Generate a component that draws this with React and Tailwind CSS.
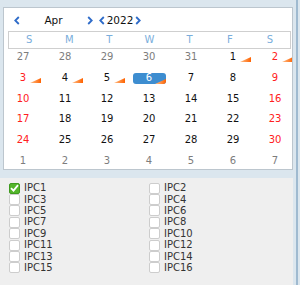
import React from 'react';

const weekdays = ['S', 'M', 'T', 'W', 'T', 'F', 'S'];

// each day: [label, kind, marked]; kind: 'out' | 'in' | 'wkend' | 'sel'
const weeks = [
  [['27', 'out'], ['28', 'out'], ['29', 'out'], ['30', 'out'], ['31', 'out'], ['1', 'in', true], ['2', 'wkend', true]],
  [['3', 'wkend', true], ['4', 'in', true], ['5', 'in', true], ['6', 'sel', true], ['7', 'in'], ['8', 'in'], ['9', 'wkend']],
  [['10', 'wkend'], ['11', 'in'], ['12', 'in'], ['13', 'in'], ['14', 'in'], ['15', 'in'], ['16', 'wkend']],
  [['17', 'wkend'], ['18', 'in'], ['19', 'in'], ['20', 'in'], ['21', 'in'], ['22', 'in'], ['23', 'wkend']],
  [['24', 'wkend'], ['25', 'in'], ['26', 'in'], ['27', 'in'], ['28', 'in'], ['29', 'in'], ['30', 'wkend']],
  [['1', 'out'], ['2', 'out'], ['3', 'out'], ['4', 'out'], ['5', 'out'], ['6', 'out'], ['7', 'out']],
];

const channels = Array.from({ length: 16 }, (_, i) => ({ name: `IPC${i + 1}`, checked: i === 0 }));

function Chevron({ dir }) {
  return (
    <svg width="6" height="9" viewBox="0 0 6 9" className="shrink-0">
      <path
        d={dir === 'left' ? 'M4.8 1 L1.3 4.5 L4.8 8' : 'M1.2 1 L4.7 4.5 L1.2 8'}
        fill="none"
        stroke="#2f6cc9"
        strokeWidth="1.8"
      />
    </svg>
  );
}

function Mark({ id }) {
  return (
    <svg width="11" height="5" viewBox="0 0 11 5">
      <defs>
        <linearGradient id={id} x1="0" y1="0" x2="1" y2="0">
          <stop offset="0" stopColor="#ffc08a" />
          <stop offset="1" stopColor="#ff6200" />
        </linearGradient>
      </defs>
      <polygon points="0,5 11,5 11,0" fill={`url(#${id})`} />
    </svg>
  );
}

function Day({ label, kind, marked, id }) {
  if (kind === 'sel') {
    return (
      <div className="flex h-[20.7px] items-center justify-center">
        <div className="relative flex h-[11px] w-[33px] items-center justify-center overflow-hidden rounded-[3px] bg-[#3d8dd0] leading-none text-white">
          {label}
          <span className="absolute bottom-0 right-0 flex">
            <Mark id={id} />
          </span>
        </div>
      </div>
    );
  }
  const color = kind === 'out' ? 'text-[#7d7d7d]' : kind === 'wkend' ? 'text-[#ff2020]' : 'text-[#111]';
  return (
    <div className="flex h-[20.7px] items-center justify-center">
      <span className={`relative leading-none ${color}`}>
        {label}
        {marked && (
          <span className="absolute bottom-0 left-[calc(100%+4px)] flex">
            <Mark id={id} />
          </span>
        )}
      </span>
    </div>
  );
}

function Check({ checked }) {
  if (checked) {
    return (
      <span className="flex h-[11px] w-[11px] shrink-0 items-center justify-center rounded-[2px] border border-[#3f9a1e] bg-[#53b52b]">
        <svg width="9" height="8" viewBox="0 0 9 8">
          <path d="M1 4.2 L3.5 6.6 L8 1.2" fill="none" stroke="#fff" strokeWidth="1.8" />
        </svg>
      </span>
    );
  }
  return <span className="h-[11px] w-[11px] shrink-0 rounded-[2px] border border-[#cdcdcd] bg-white" />;
}

export default function App() {
  return (
    <div className="flex h-[285px] w-[300px] bg-[#dbe6ee] font-['DejaVu_Sans',sans-serif] text-[10px]">
      <div className="flex w-[293px] flex-col">
        {/* Calendar */}
        <div className="pl-[3px] pt-[7px]">
          <div className="h-[163px] overflow-hidden border border-[#bcc6ce] bg-white">
            <div className="flex h-[23px] items-center pt-[2px] pl-[10px] text-[10.5px] text-[#111]">
              <Chevron dir="left" />
              <span className="w-[67px] text-center">Apr</span>
              <Chevron dir="right" />
              <span className="w-[6px]" />
              <Chevron dir="left" />
              <span className="w-[30px] text-center">2022</span>
              <Chevron dir="right" />
            </div>

            <div className="ml-[4px] mr-px grid h-[18px] grid-cols-7 items-center border border-[#cfcfcf] text-[#7aaedc]">
              {weekdays.map((d, i) => (
                <span key={i} className="text-center leading-none">{d}</span>
              ))}
            </div>

            <div className="-ml-[2px] -mt-[2px] grid w-[294px] grid-cols-7">
              {weeks.flatMap((week, w) =>
                week.map(([label, kind, marked], d) => (
                  <Day key={`${w}-${d}`} id={`m${w}${d}`} label={label} kind={kind} marked={marked} />
                ))
              )}
            </div>
          </div>
        </div>

        {/* Channel list */}
        <div className="mt-[8px] flex-1 bg-[#efefef] pl-[9px] pt-[4.5px]">
          <div className="grid grid-cols-[140px_140px] auto-rows-[11.4px]">
            {channels.map((c) => (
              <label key={c.name} className="flex items-center gap-[4px] leading-none text-[#333]">
                <Check checked={c.checked} />
                <span>{c.name}</span>
              </label>
            ))}
          </div>
        </div>
      </div>

      {/* window edge */}
      <div className="w-[3px] bg-[#dbe6ee]" />
      <div className="w-[1.5px] bg-[#9fbad0]" />
      <div className="flex-1 bg-[#dbe6ee]" />
    </div>
  );
}
